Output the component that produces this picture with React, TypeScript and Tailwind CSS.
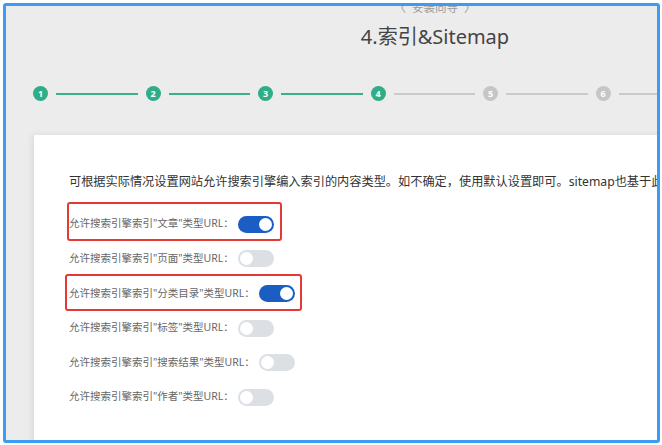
import React from "react";

const steps = [1, 2, 3, 4, 5, 6, 7];
const current = 4;

const rows = [
  { name: "文章", on: true },
  { name: "页面", on: false },
  { name: "分类目录", on: true },
  { name: "标签", on: false },
  { name: "搜索结果", on: false },
  { name: "作者", on: false },
];

function Toggle({ on }: { on: boolean }) {
  return (
    <div
      className={`relative w-[36px] h-[17px] rounded-full shrink-0 ${
        on ? "bg-[#1a5ec4]" : "bg-[#dcdfe4]"
      }`}
    >
      <div
        className={`absolute top-[2px] w-[13px] h-[13px] rounded-full bg-white ${
          on ? "right-[2px]" : "left-[2px]"
        }`}
      />
    </div>
  );
}

export default function App() {
  return (
    <div
      className="relative w-[662px] h-[445px] bg-white overflow-hidden"
      style={{ fontFamily: '"Noto Sans", "Noto Sans CJK SC", sans-serif' }}
    >
      {/* Browser frame */}
      <div className="ml-[3px] mt-[3px] w-[657px] h-[440px] border-[3px] border-[#3b9cf2] rounded-[3px] bg-[#ececec] overflow-hidden">
        <div className="w-[858px]">
          {/* Header */}
          <div className="-mt-[6px] text-center text-[11.5px] leading-[16px] text-[#9a9a9a]">
            〈&nbsp;&nbsp;安装向导&nbsp;&nbsp;〉
          </div>
          <div className="mt-[7px] text-center text-[20px] leading-[28px] text-[#444]">
            4.索引&amp;Sitemap
          </div>

          {/* Stepper */}
          <div className="mt-[35px] pl-[27px] flex items-center">
            {steps.map((n, i) => {
              const done = n <= current;
              return (
                <div key={n} className="flex items-center">
                  <div
                    className={`w-[15px] h-[15px] rounded-full flex items-center justify-center text-white text-[9px] font-bold leading-none ${
                      done ? "bg-[#2fad86]" : "bg-[#c6c6c6]"
                    }`}
                  >
                    {n}
                  </div>
                  {i < steps.length - 1 && (
                    <div
                      className={`mx-[8px] w-[81.5px] h-[2px] ${
                        n < current ? "bg-[#3bb08f]" : "bg-[#cacaca]"
                      }`}
                    />
                  )}
                </div>
              );
            })}
          </div>

          {/* Card */}
          <div className="mt-[34px] ml-[28px] h-[320px] bg-white shadow-[-2px_0_6px_rgba(0,0,0,0.08)] pl-[35px] pt-[37px]">
            <p className="text-[12.2px] leading-[20px] text-[#333] whitespace-nowrap">
              可根据实际情况设置网站允许搜索引擎编入索引的内容类型。如不确定，使用默认设置即可。sitemap也基于此设置生成。
            </p>
            <div className="mt-[15px] flex flex-col">
              {rows.map((r) => (
                <div key={r.name} className="h-[34.6px] flex items-center gap-[4px]">
                  <span className="text-[10.5px] text-[#666] whitespace-nowrap">
                    允许搜索引擎索引"{r.name}"类型URL：
                  </span>
                  <Toggle on={r.on} />
                </div>
              ))}
            </div>
          </div>
        </div>
      </div>

      {/* Annotation boxes */}
      <div className="absolute left-[67px] top-[202px] w-[215px] h-[39px] border-2 border-[#e53935] rounded-[3px]" />
      <div className="absolute left-[65px] top-[274px] w-[237px] h-[37px] border-2 border-[#e53935] rounded-[3px]" />
    </div>
  );
}
